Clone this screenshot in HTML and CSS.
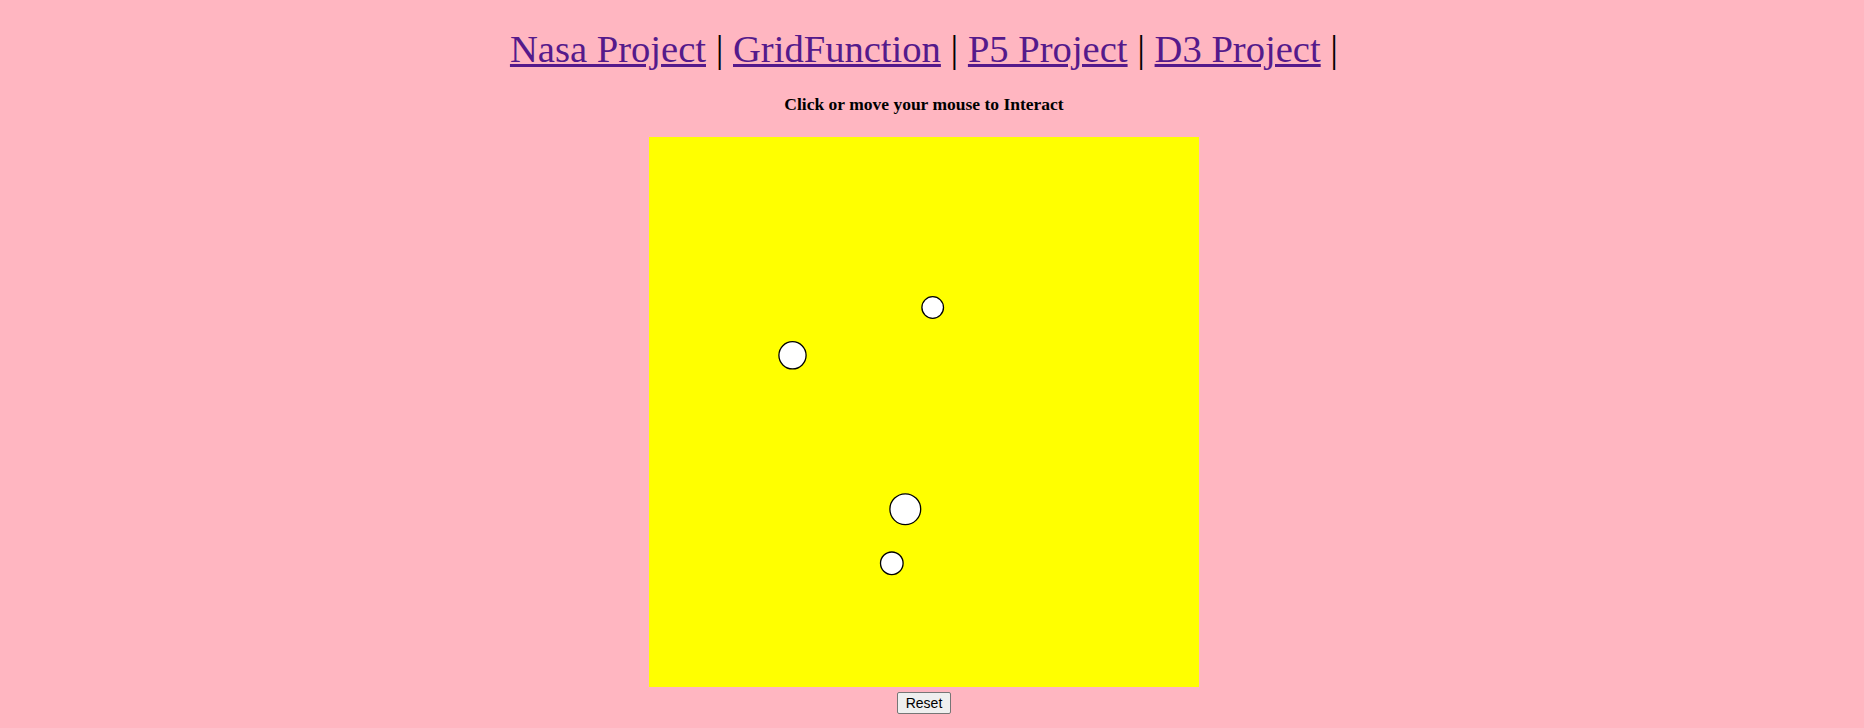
FILE: index.html
```html
<!DOCTYPE html>
<html>
<head>
<meta charset="utf-8">
<title>P5 Project</title>
<link rel="stylesheet" href="styles.css">
</head>
<body>
<div class="page">
  <h1 class="nav">
    <a href="#">Nasa Project</a> | <a href="#">GridFunction</a> | <a href="#">P5 Project</a> | <a href="#">D3 Project</a> |
  </h1>
  <h4 class="hint">Click or move your mouse to Interact</h4>
  <div class="stage">
    <svg class="canvas" width="550" height="550" viewBox="0 0 550 550">
      <rect x="0" y="0" width="550" height="550" fill="#ffff00"/>
      <circle cx="283.7" cy="170.5" r="10.8" fill="#fff" stroke="#000" stroke-width="1.3"/>
      <circle cx="143.5" cy="218.3" r="13.6" fill="#fff" stroke="#000" stroke-width="1.3"/>
      <circle cx="256.3" cy="372.2" r="15.4" fill="#fff" stroke="#000" stroke-width="1.3"/>
      <circle cx="242.8" cy="426.3" r="11.3" fill="#fff" stroke="#000" stroke-width="1.3"/>
    </svg>
    <button class="reset" type="button">Reset</button>
  </div>
</div>
</body>
</html>
```
FILE: styles.css
```css
html, body {
  background: #ffb6c1;
}
body {
  margin: 0;
  padding: 8px 24px 8px 8px;
  font-family: "Liberation Serif", "Times New Roman", serif;
  color: #000;
}
.page {
  text-align: center;
}
.nav {
  font-size: 38.6px;
  font-weight: normal;
  margin: 19px 0 0 0;
  line-height: 44px;
}
.nav a {
  color: #551a8b;
  text-decoration-thickness: 3px;
}
.hint {
  font-size: 17.5px;
  font-weight: bold;
  margin: 24px 0 0 0;
  line-height: 19px;
}
.stage {
  display: flex;
  flex-direction: column;
  align-items: center;
  gap: 5px;
  margin-top: 23px;
}
.canvas {
  display: block;
}
.reset {
  font-family: "Liberation Sans", Arial, sans-serif;
  font-size: 14px;
  padding: 1px 8px;
  height: 22px;
  background: #efefef;
  border: 1px solid #767676;
  border-radius: 2px;
  color: #000;
}
```
